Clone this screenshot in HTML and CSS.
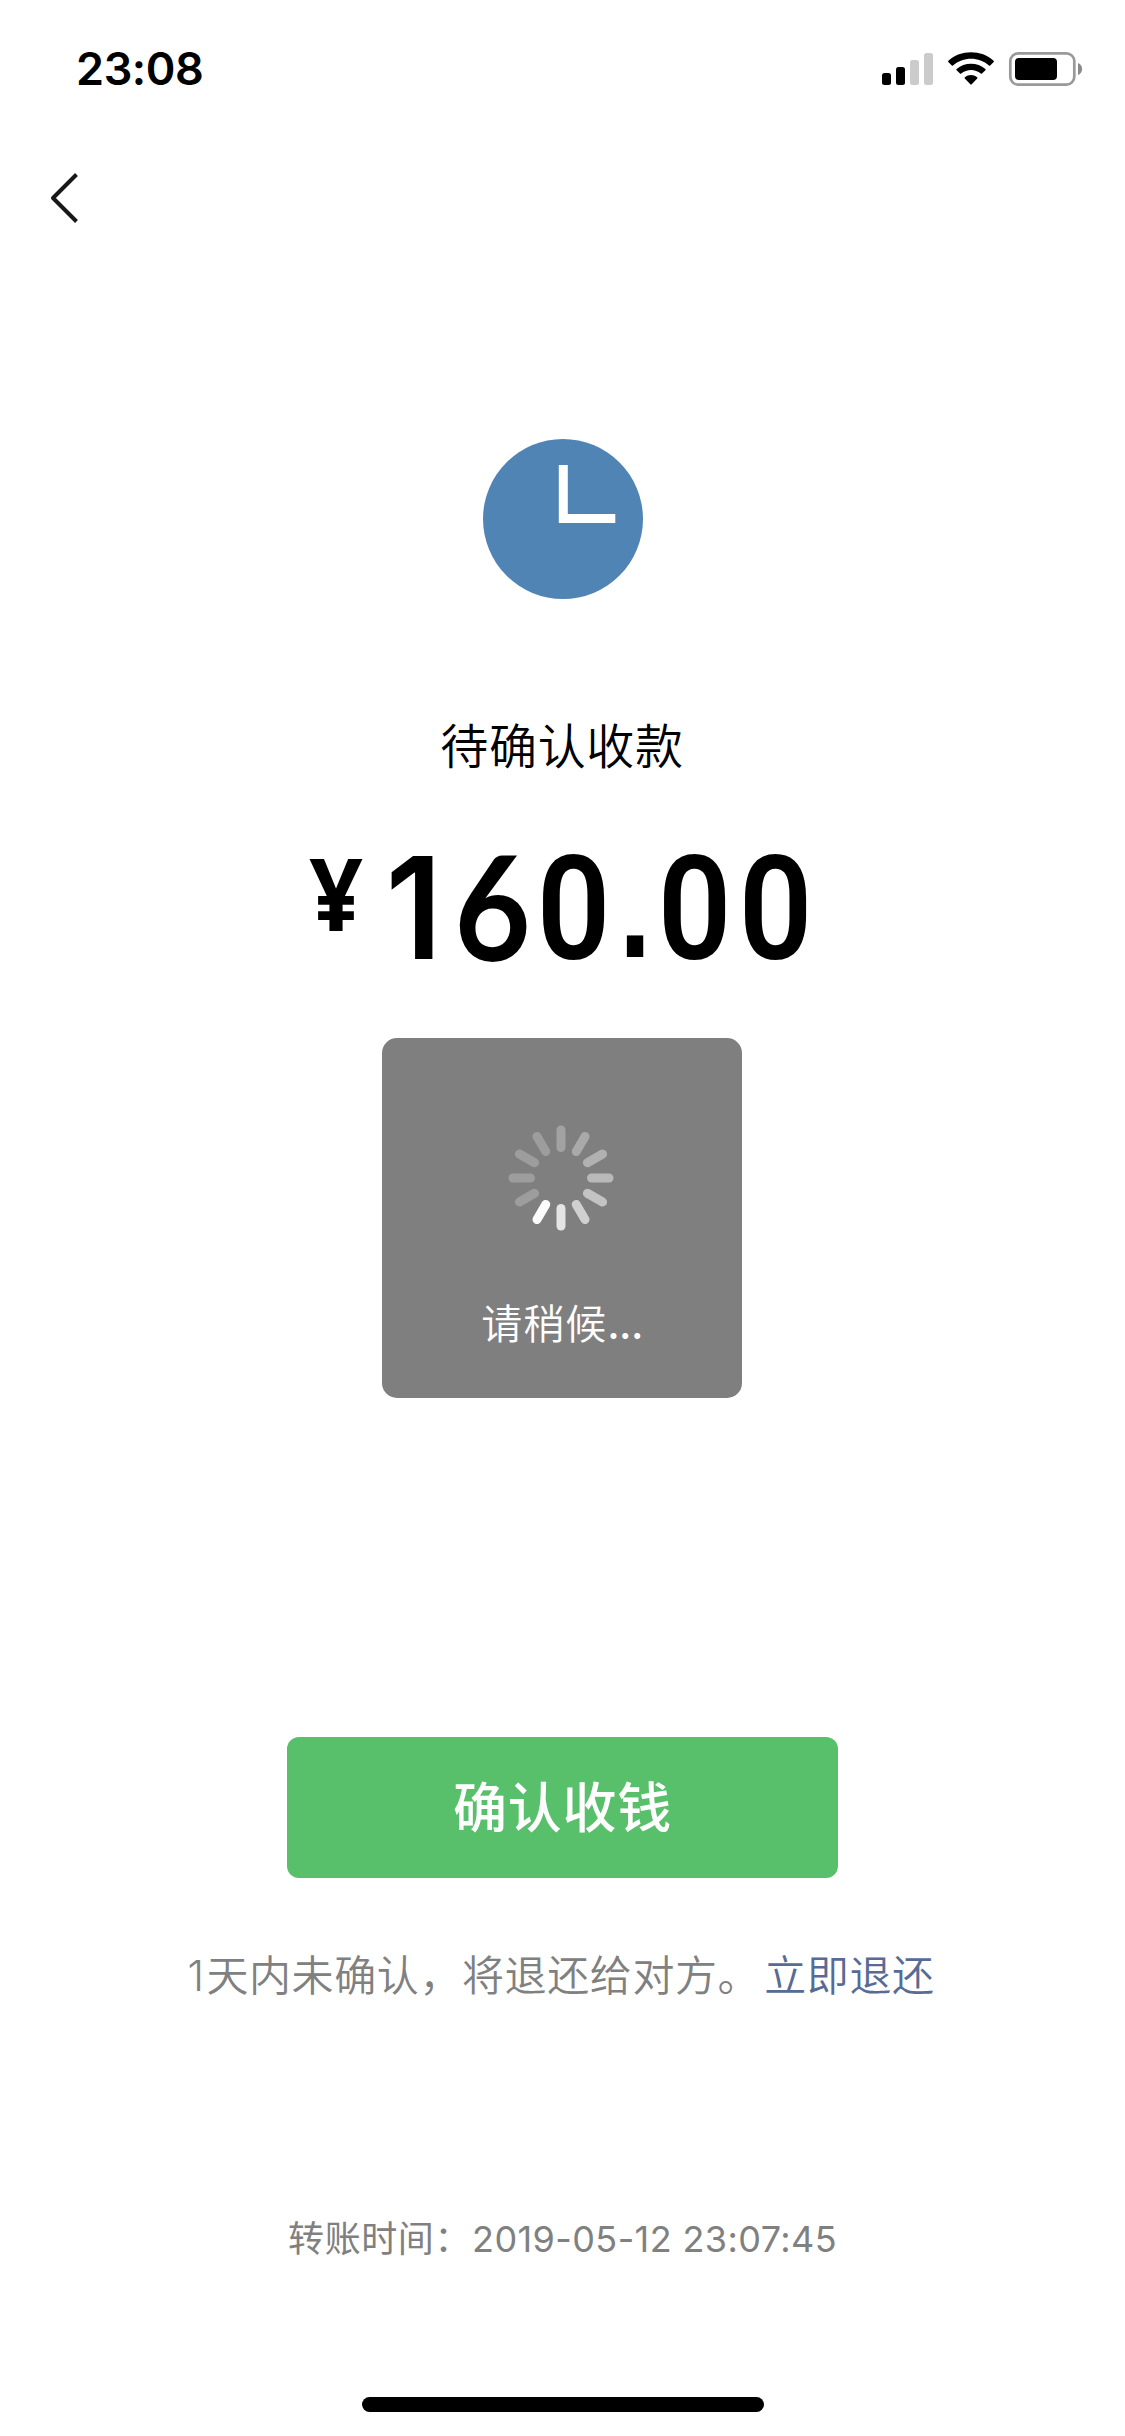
FILE: index.html
```html
<!DOCTYPE html>
<html lang="zh-CN">
<head>
<meta charset="utf-8">
<title>待确认收款</title>
<link rel="stylesheet" href="styles.css">
</head>
<body>
<div class="screen">
  <header class="status-bar">
    <span class="status-time">23:08</span>
    <svg class="status-icons" width="204" height="36" viewBox="0 0 204 36">
      <rect x="1" y="22" width="9" height="12" rx="2.5"/>
      <rect x="15" y="16" width="9" height="18" rx="2.5"/>
      <rect x="29" y="9" width="9" height="25" rx="2.5" fill="#cbcbcb"/>
      <rect x="43" y="2" width="9" height="32" rx="2.5" fill="#cbcbcb"/>
      <path d="M67.3 11 Q66.8 10.4 67.4 9.8 C79.6-1.5 100.4-1.5 112.6 9.8 Q113.200 10.400 112.700 11 L109.200 14.500 Q108.600 15 108 14.500 C98 5.400 82 5.400 72 14.500 Q71.400 15 70.800 14.500 Z"/>
      <path d="M75.600 19.200 Q75 18.600 75.600 18 C83.600 10.900 96.400 10.900 104.400 18 Q105 18.600 104.400 19.200 L101 22.600 Q100.400 23.100 99.800 22.600 C94.200 17.800 85.800 17.800 80.200 22.600 Q79.600 23.100 79 22.600 Z"/>
      <path d="M83.800 27.400 Q83.200 26.800 83.900 26.300 C87.500 23.300 92.500 23.300 96.100 26.300 Q96.800 26.800 96.200 27.400 L90.700 33.300 Q90 34 89.300 33.300 Z"/>
      <rect x="129.300" y="2.300" width="64" height="31.400" rx="8" fill="none" stroke="#999" stroke-width="2.700"/>
      <rect x="134" y="7" width="42" height="22" rx="4"/>
      <path d="M197 12 C202.500 14 202.500 22 197 24 Z" fill="#8a8a8a"/>
    </svg>
  </header>
  <nav class="nav-bar">
    <svg class="back-icon" width="32" height="54" viewBox="0 0 32 54">
      <path d="M27.500 3.500 L4 27 L27.500 50.500" fill="none" stroke="#181818" stroke-width="4" stroke-linejoin="round"/>
    </svg>
  </nav>
  <main class="transfer">
    <svg class="clock-icon" width="160" height="160" viewBox="0 0 160 160">
      <circle cx="80" cy="80" r="80" fill="#5084b5"/>
      <path d="M80.300 26 V79.500 H132.300" fill="none" stroke="#fff" stroke-width="9"/>
    </svg>
    <h1 class="title">待确认收款</h1>
    <div class="amount"><span class="currency">¥</span><span class="digit one">1</span><span class="digit six">6</span><span class="digit">0</span><span class="digit point">.</span><span class="digit">0</span><span class="digit">0</span></div>
    <div class="toast">
      <svg class="spinner" width="106" height="106" viewBox="-53 -53 106 106" stroke="#fff" stroke-width="9" stroke-linecap="round">
        <path d="M0-30.500V-48" opacity=".27"/>
        <path d="M0-30.500V-48" opacity=".33" transform="rotate(30)"/>
        <path d="M0-30.500V-48" opacity=".39" transform="rotate(60)"/>
        <path d="M0-30.500V-48" opacity=".45" transform="rotate(90)"/>
        <path d="M0-30.500V-48" opacity=".53" transform="rotate(120)"/>
        <path d="M0-30.500V-48" opacity=".63" transform="rotate(150)"/>
        <path d="M0-30.500V-48" opacity=".79" transform="rotate(180)"/>
        <path d="M0-30.500V-48" opacity=".98" transform="rotate(210)"/>
        <path d="M0-30.500V-48" opacity=".23" transform="rotate(240)"/>
        <path d="M0-30.500V-48" opacity=".23" transform="rotate(270)"/>
        <path d="M0-30.500V-48" opacity=".23" transform="rotate(300)"/>
        <path d="M0-30.500V-48" opacity=".23" transform="rotate(330)"/>
      </svg>
      <span class="toast-text">请稍候<span class="dots">...</span></span>
    </div>
    <button class="confirm">确认收钱</button>
    <p class="hint"><span class="days">1</span>天内未确认，将退还给对方。<a class="refund">立即退还</a></p>
    <p class="time">转账时间：<span class="stamp">2019-05-12 23:07:45</span></p>
  </main>
  <div class="home-indicator"></div>
</div>
</body>
</html>
```
FILE: styles.css
```css
* { box-sizing: border-box; margin: 0; padding: 0; }

body {
  background: #fff;
  color: #000;
  font-family: "Inter", "Noto Sans CJK SC", sans-serif;
}

.screen {
  width: 1125px;
  height: 2436px;
  display: flex;
  flex-direction: column;
  overflow: hidden;
}

.status-bar {
  height: 132px;
  padding: 0 40px 0 76px;
  display: flex;
  justify-content: space-between;
}

.status-time {
  margin-top: 39px;
  height: 60px;
  line-height: 60px;
  font-size: 45px;
  font-weight: 600;
  letter-spacing: -.4px;
}

.status-icons { margin-top: 51px; }

.nav-bar { height: 132px; padding: 39px 0 0 49px; }

.back-icon { display: block; }

.transfer {
  flex: 1;
  display: flex;
  flex-direction: column;
  align-items: center;
}

.clock-icon { margin-top: 175px; }

.title {
  margin: 109px 1px 0 0;
  height: 72px;
  line-height: 70px;
  font-family: "Noto Sans CJK SC", sans-serif;
  font-size: 48px;
  font-weight: 350;
  letter-spacing: .7px;
}

.amount {
  margin-top: 53px;
  width: 507px;
  height: 149px;
  display: flex;
  white-space: nowrap;
}

/* Condensed DIN-like numerals: each glyph is centred in its own cell */
.currency,
.digit {
  display: flex;
  justify-content: center;
}

.currency {
  width: 54px;
  height: 118px;
  margin-right: 17px;
  line-height: 118px;
  font-family: "Open Sans", sans-serif;
  font-size: 101px;
  font-weight: 700;
  transform: scaleX(.93);
}

.digit {
  width: 81px;
  height: 152px;
  line-height: 152px;
  font-family: "Roboto", sans-serif;
  font-size: 145px;
  font-weight: 600;
  transform: scaleX(.89);
}

.one {
  width: 70px;
  height: 149px;
  margin-right: 4px;
  line-height: 149px;
  font-family: "Inter", sans-serif;
  font-size: 141px;
  transform: scaleX(.95);
}

.six {
  height: 145px;
  line-height: 145px;
  font-family: "Lato", sans-serif;
  font-weight: 700;
  transform: scaleX(.91);
}

.point {
  width: 41px;
  height: 149px;
  line-height: 149px;
  font-family: "Liberation Sans", sans-serif;
  font-weight: 700;
  transform: translateX(1px) scaleX(.8);
}

.toast {
  margin: 56px 1px 0 0;
  width: 360px;
  height: 360px;
  padding-top: 87px;
  border-radius: 15px;
  background: #7f7f7f;
  color: #fff;
  display: flex;
  flex-direction: column;
  align-items: center;
}

.spinner { margin-right: 2px; }

.toast-text {
  margin-top: 63px;
  height: 60px;
  line-height: 60px;
  font-size: 41px;
  font-weight: 350;
  letter-spacing: 1px;
}

.dots { font-weight: 500; letter-spacing: -.6px; }

.confirm {
  margin-top: 339px;
  width: 551px;
  height: 141px;
  padding-bottom: 6px;
  border: 0;
  border-radius: 12px;
  background: #58bf6b;
  color: #fff;
  font-family: "Noto Sans CJK SC", sans-serif;
  font-size: 54px;
  font-weight: 500;
  letter-spacing: .7px;
}

.hint {
  margin: 66px 3px 0 0;
  height: 62px;
  line-height: 64px;
  font-size: 42px;
  font-weight: 350;
  letter-spacing: .6px;
  color: #808080;
  white-space: nowrap;
}

.days { letter-spacing: 2.5px; }

.refund { margin-left: 4px; color: #576b95; }

.time {
  margin-top: 203px;
  height: 60px;
  line-height: 60px;
  font-size: 36px;
  font-weight: 400;
  letter-spacing: .6px;
  color: #808080;
  white-space: nowrap;
}

.stamp { margin-left: 1px; letter-spacing: .4px; }

.home-indicator {
  width: 402px;
  height: 15px;
  margin: 0 auto 24px;
  border-radius: 8px;
  background: #000;
}
```
